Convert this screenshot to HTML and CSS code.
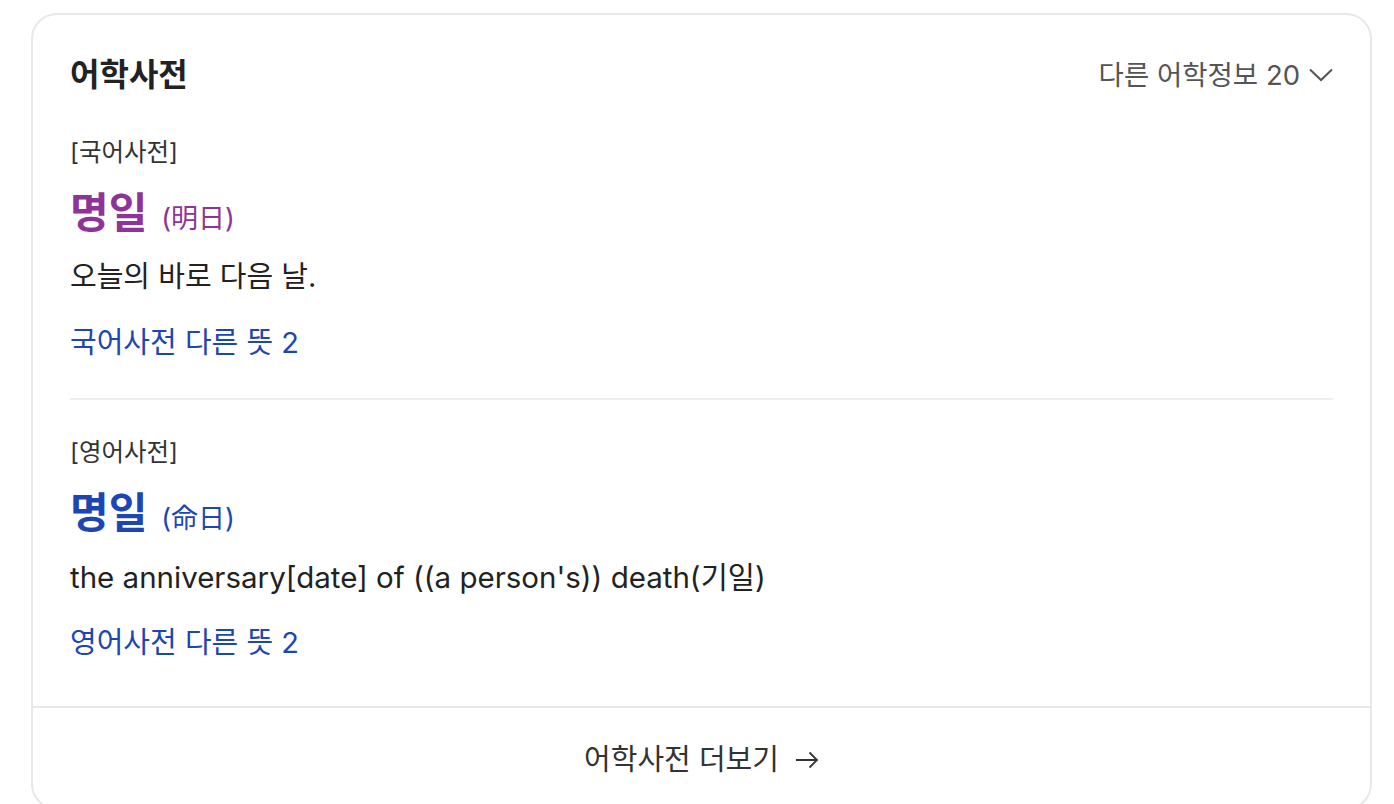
FILE: index.html
```html
<!DOCTYPE html>
<html lang="ko">
<head>
    <meta charset="UTF-8">
    <meta name="viewport" content="width=device-width, initial-scale=1.0">
    <title>어학사전</title>
    <link rel="stylesheet" href="styles.css">
</head>
<body>
    <div class="dict-card">
        <div class="dict-body">
            <div class="dict-header">
                <h2>어학사전</h2>
                <a href="#" class="more-info">
                    다른 어학정보 20
                    <svg width="24" height="14" viewBox="0 0 24 14"><path d="M1 1.5 L12 12 L23 1.5" fill="none" stroke="#555" stroke-width="2"/></svg>
                </a>
            </div>

            <div class="dict-section">
                <div class="dict-type">[국어사전]</div>
                <div class="entry-word korean">명일 <span class="hanja">(明日)</span></div>
                <p class="entry-mean">오늘의 바로 다음 날.</p>
                <a href="#" class="other-mean">국어사전 다른 뜻 2</a>
            </div>

            <div class="dict-section">
                <div class="dict-type">[영어사전]</div>
                <div class="entry-word english">명일 <span class="hanja">(命日)</span></div>
                <p class="entry-mean">the anniversary[date] of ((a person's)) death(기일)</p>
                <a href="#" class="other-mean">영어사전 다른 뜻 2</a>
            </div>
        </div>

        <a href="#" class="dict-footer">
            어학사전 더보기
            <svg width="24" height="18" viewBox="0 0 24 18"><path d="M1 9 H22 M14.5 1.5 L22 9 L14.5 16.5" fill="none" stroke="#333" stroke-width="1.8"/></svg>
        </a>
    </div>
</body>
</html>
```

FILE: styles.css
```css
* {
    margin: 0;
    padding: 0;
    box-sizing: border-box;
    font-family: Inter, "Noto Sans CJK KR", sans-serif;
}

body {
    background-color: #fff;
    padding: 13px 22px 0 31px;
}

a {
    text-decoration: none;
}

/* Card */
.dict-card {
    border: 2px solid #e8e8e8;
    border-radius: 26px;
    background-color: #fff;
}

.dict-body {
    padding: 40px 37px 45px;
}

.dict-header {
    display: flex;
    justify-content: space-between;
    align-items: center;
    height: 40px;
}

.dict-header h2 {
    font-size: 32px;
    font-weight: bold;
    color: #222;
    line-height: 40px;
}

.more-info {
    display: flex;
    align-items: center;
    gap: 9px;
    font-size: 27.5px;
    color: #555;
    line-height: 40px;
}

/* Sections */
.dict-section {
    padding-top: 42px;
}

.dict-section + .dict-section {
    margin-top: 37px;
    padding-top: 37px;
    border-top: 2px solid #efefef;
}

.dict-type {
    font-size: 24.5px;
    color: #333;
    line-height: 30px;
}

.entry-word {
    margin-top: 21px;
    font-size: 42px;
    font-weight: bold;
    line-height: 50px;
}

.entry-word .hanja {
    margin-left: 4px;
    font-size: 27px;
    font-weight: normal;
}

.entry-word.korean {
    color: #8e3399;
}

.entry-word.english {
    color: #1c46b3;
}

.entry-mean {
    margin-top: 15px;
    font-size: 29px;
    color: #222;
    line-height: 36px;
}

.english + .entry-mean {
    font-size: 29.5px;
}

.other-mean {
    display: block;
    margin-top: 30px;
    font-size: 29px;
    color: #1c46b3;
    line-height: 36px;
}

/* Footer */
.dict-footer {
    display: flex;
    justify-content: center;
    align-items: center;
    gap: 16px;
    padding: 34px 0 30px;
    border-top: 2px solid #e8e8e8;
    font-size: 29px;
    color: #333;
    line-height: 36px;
}
```
